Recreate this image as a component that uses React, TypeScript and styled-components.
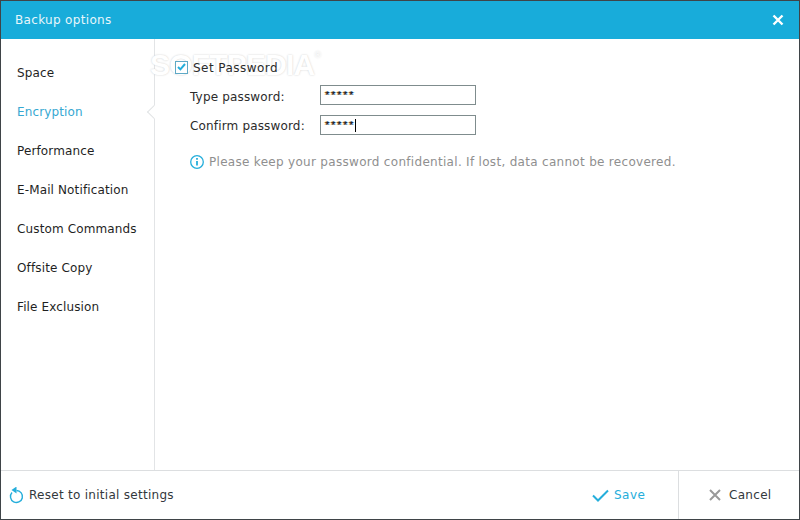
import styled, { createGlobalStyle } from 'styled-components'

const GlobalStyle = createGlobalStyle`
  html, body { margin: 0; padding: 0; background: #fff; }
  * { box-sizing: border-box; }
`

const Window = styled.div`
  width: 800px;
  height: 520px;
  display: flex;
  flex-direction: column;
  border: 1px solid #3f4448;
  background: #fff;
  font-family: "DejaVu Sans", sans-serif;
  font-size: 12px;
  color: #2b2b2b;
  overflow: hidden;
`

const TitleBar = styled.div`
  height: 38px;
  flex: none;
  display: flex;
  align-items: center;
  justify-content: space-between;
  padding: 0 15px 0 14px;
  background: #18acda;
  color: #e8f6fb;
  letter-spacing: 0.33px;
`

const CloseButton = styled.button`
  width: 12px;
  height: 12px;
  padding: 0;
  border: 0;
  background: none;
  display: flex;
`

const Body = styled.div`
  flex: 1;
  display: flex;
  min-height: 0;
  position: relative;
`

const Sidebar = styled.nav`
  width: 154px;
  flex: none;
  display: flex;
  flex-direction: column;
  gap: 19px;
  padding: 24px 0 0 16px;
  border-right: 1px solid #e2e4e6;
  letter-spacing: 0.13px;
`

const NavItem = styled.div<{ $active?: boolean }>`
  height: 20px;
  line-height: 20px;
  position: relative;
  color: ${(p) => (p.$active ? '#36a8d2' : '#1f1f1f')};
  ${(p) =>
    p.$active &&
    `&::after {
      content: '';
      position: absolute;
      right: -5px;
      top: 5px;
      width: 9px;
      height: 9px;
      background: #fff;
      border-left: 1px solid #e2e4e6;
      border-bottom: 1px solid #e2e4e6;
      transform: rotate(45deg);
    }`}
`

const Content = styled.main`
  flex: 1;
  display: flex;
  flex-direction: column;
  padding: 21px 0 0 20px;
`

const Watermark = styled.div`
  position: absolute;
  left: 149px;
  top: 9px;
  font-family: "Liberation Sans", sans-serif;
  font-size: 30px;
  line-height: 34px;
  font-weight: bold;
  letter-spacing: -0.8px;
  color: #fff;
  text-shadow: 0 0 2px #cccccc;
  pointer-events: none;

  sup {
    font-size: 9px;
    font-weight: normal;
    vertical-align: 17px;
    line-height: 0;
    letter-spacing: 0;
  }
`

const CheckRow = styled.label`
  position: relative;
  display: flex;
  align-items: center;
  gap: 5px;
  height: 14px;
  letter-spacing: 0.45px;
`

const CheckText = styled.span`
  padding-top: 2px;
`

const CheckBox = styled.span`
  width: 13px;
  height: 13px;
  display: flex;
  align-items: center;
  justify-content: center;
  border: 1px solid #5fa9c6;
  background: #fff;
`

const Fields = styled.div`
  position: relative;
  display: flex;
  flex-direction: column;
  gap: 10px;
  margin-top: 11px;
  padding-left: 15px;
`

const FieldRow = styled.div`
  display: flex;
  align-items: center;
`

const FieldLabel = styled.span<{ $top: number }>`
  width: 130px;
  padding-top: ${(p) => p.$top}px;
  letter-spacing: 0.16px;
`

const PasswordBox = styled.div`
  width: 156px;
  height: 20px;
  display: flex;
  align-items: center;
  padding-left: 4px;
  border: 1px solid #7f8c8d;
  font-family: "Liberation Sans", sans-serif;
  font-size: 11px;
  color: #000;
`

const Stars = styled.span`
  height: 14px;
  line-height: 14px;
  letter-spacing: 1.7px;
  margin-top: -1px;
  text-shadow: -1px 0 0 rgba(230, 150, 50, 0.7), 1px 0 0 rgba(50, 140, 220, 0.7);
`

const Caret = styled.span`
  width: 1px;
  height: 13px;
  background: #000;
`

const Hint = styled.div`
  display: flex;
  align-items: center;
  gap: 5px;
  margin-top: 20px;
  padding-left: 15px;
  color: #8f8f8f;
  letter-spacing: 0.3px;
`

const Footer = styled.footer`
  height: 49px;
  flex: none;
  display: flex;
  align-items: stretch;
  border-top: 1px solid #dcdee0;
`

const ResetLink = styled.div`
  flex: 1;
  display: flex;
  align-items: center;
  gap: 5px;
  padding-left: 8px;
  color: #33383c;
  letter-spacing: 0.28px;
`

const ActionButton = styled.div<{ $primary?: boolean; $width: number }>`
  width: ${(p) => p.$width}px;
  display: flex;
  align-items: center;
  gap: ${(p) => (p.$primary ? 5 : 8)}px;
  letter-spacing: ${(p) => (p.$primary ? 0.5 : 0.3)}px;
  color: ${(p) => (p.$primary ? '#25aedb' : '#33383c')};
  ${(p) => !p.$primary && 'border-left: 1px solid #dcdee0; padding-left: 30px;'}
`

const navItems = [
  'Space',
  'Encryption',
  'Performance',
  'E-Mail Notification',
  'Custom Commands',
  'Offsite Copy',
  'File Exclusion',
]

const App = () => {
  return (
    <>
      <GlobalStyle />
      <Window>
        <TitleBar>
          <span>Backup options</span>
          <CloseButton aria-label="Close">
            <svg width="12" height="12" viewBox="0 0 12 12">
              <path d="M1.5 1.5l9 9M10.5 1.5l-9 9" stroke="#fff" strokeWidth="2.4" fill="none" />
            </svg>
          </CloseButton>
        </TitleBar>
        <Body>
          <Watermark>SOFTPEDIA<sup>®</sup></Watermark>
          <Sidebar>
            {navItems.map((item) => (
              <NavItem key={item} $active={item === 'Encryption'}>{item}</NavItem>
            ))}
          </Sidebar>
          <Content>
            <CheckRow>
              <CheckBox>
                <svg width="9" height="8" viewBox="0 0 9 8">
                  <path d="M1 4l2.4 2.4L8 1" stroke="#25aedb" strokeWidth="2" fill="none" />
                </svg>
              </CheckBox>
              <CheckText>Set Password</CheckText>
            </CheckRow>
            <Fields>
              <FieldRow>
                <FieldLabel $top={3}>Type password:</FieldLabel>
                <PasswordBox><Stars>*****</Stars></PasswordBox>
              </FieldRow>
              <FieldRow>
                <FieldLabel $top={1}>Confirm password:</FieldLabel>
                <PasswordBox><Stars>*****</Stars><Caret /></PasswordBox>
              </FieldRow>
            </Fields>
            <Hint>
              <svg width="14" height="14" viewBox="0 0 14 14">
                <circle cx="7" cy="7" r="6.3" stroke="#25aedb" strokeWidth="1.3" fill="none" />
                <path d="M7 6v4.5" stroke="#25aedb" strokeWidth="1.8" />
                <path d="M7 3v1.7" stroke="#25aedb" strokeWidth="1.8" />
              </svg>
              Please keep your password confidential. If lost, data cannot be recovered.
            </Hint>
          </Content>
        </Body>
        <Footer>
          <ResetLink>
            <svg width="15" height="17" viewBox="0 1 15 17">
              <path d="M3 6.5A6 6 0 1 0 7.5 4.5" stroke="#25aedb" strokeWidth="1.4" fill="none" />
              <path d="M7.5 0.5v7L2.5 4z" fill="#25aedb" />
            </svg>
            Reset to initial settings
          </ResetLink>
          <ActionButton $primary $width={86}>
            <svg width="17" height="13" viewBox="0 0 17 13">
              <path d="M1 6.5l5 5L16 1.5" stroke="#25aedb" strokeWidth="2" fill="none" />
            </svg>
            Save
          </ActionButton>
          <ActionButton $width={121}>
            <svg width="12" height="12" viewBox="0 0 12 12">
              <path d="M1 1l10 10M11 1L1 11" stroke="#999" strokeWidth="2" fill="none" />
            </svg>
            Cancel
          </ActionButton>
        </Footer>
      </Window>
    </>
  )
}

export default App
